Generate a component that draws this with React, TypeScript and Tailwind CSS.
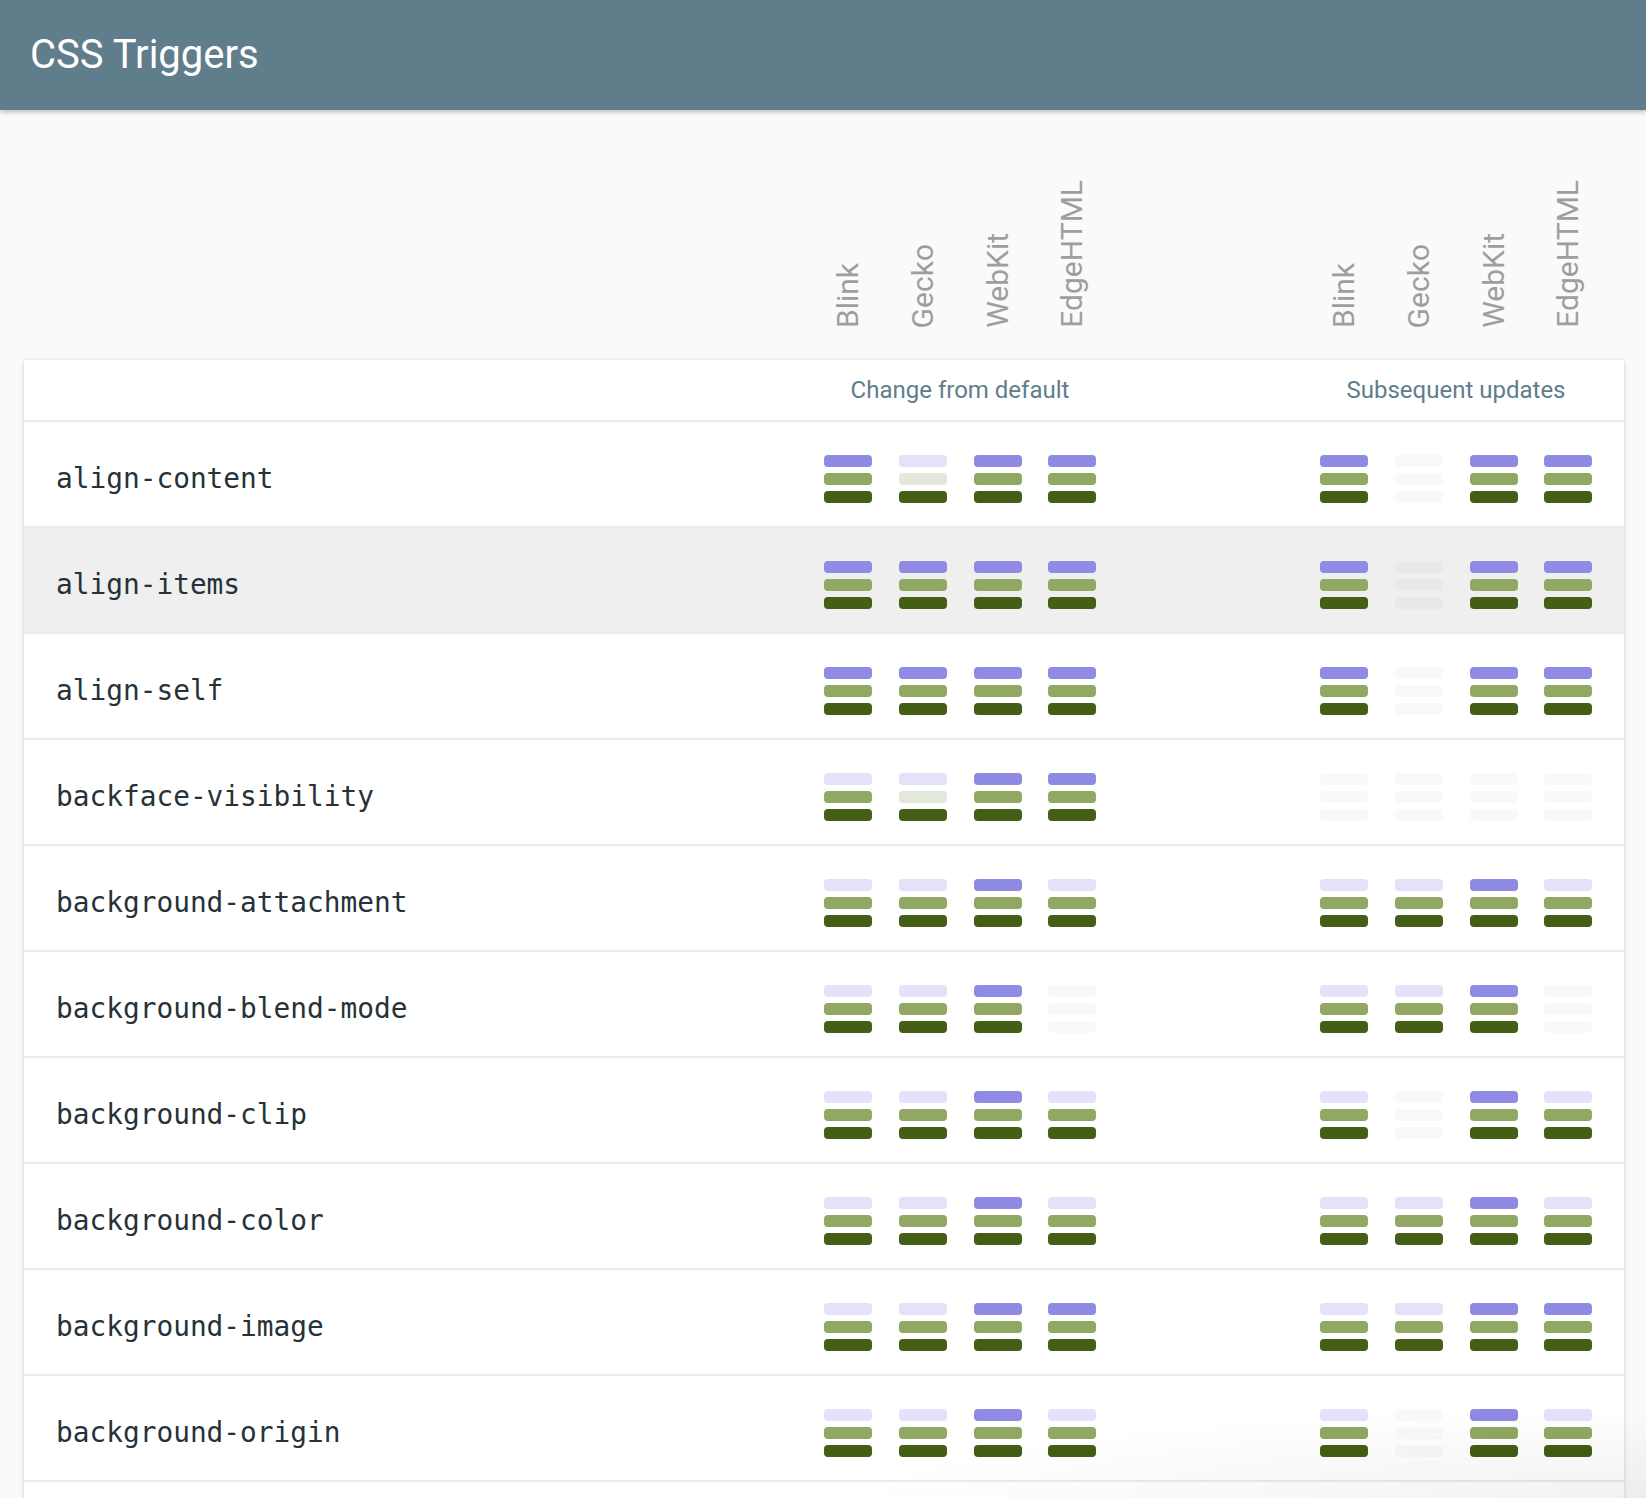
import React from "react";

type Cell = string; // "111" = layout/paint/composite, 0 = not triggered, n = no data

const rows: { name: string; change: Cell[]; update: Cell[]; hover?: boolean }[] = [
  { name: "align-content", change: ["111", "001", "111", "111"], update: ["111", "nnn", "111", "111"] },
  { name: "align-items", change: ["111", "111", "111", "111"], update: ["111", "nnn", "111", "111"], hover: true },
  { name: "align-self", change: ["111", "111", "111", "111"], update: ["111", "nnn", "111", "111"] },
  { name: "backface-visibility", change: ["011", "001", "111", "111"], update: ["nnn", "nnn", "nnn", "nnn"] },
  { name: "background-attachment", change: ["011", "011", "111", "011"], update: ["011", "011", "111", "011"] },
  { name: "background-blend-mode", change: ["011", "011", "111", "nnn"], update: ["011", "011", "111", "nnn"] },
  { name: "background-clip", change: ["011", "011", "111", "011"], update: ["011", "nnn", "111", "011"] },
  { name: "background-color", change: ["011", "011", "111", "011"], update: ["011", "011", "111", "011"] },
  { name: "background-image", change: ["011", "011", "111", "111"], update: ["011", "011", "111", "111"] },
  { name: "background-origin", change: ["011", "011", "111", "011"], update: ["011", "nnn", "111", "011"] },
  { name: "background-position", change: ["011", "011", "111", "011"], update: ["011", "011", "111", "011"] },
];

const engines = ["Blink", "Gecko", "WebKit", "EdgeHTML"];

const cols =
  "grid grid-cols-[787px_74px_76px_74px_74px_198px_74px_76px_74px_74px_19px]";

const onColors = ["bg-[#8f8ae3]", "bg-[#90a862]", "bg-[#445e15]"];
const offColors = ["bg-[#e4e2f8]", "bg-[#e2e9da]", "bg-[#d3dcc4]"];

const Bars = ({ cell }: { cell: Cell }) => (
  <div className="flex flex-col items-center gap-[6px]">
    {cell.split("").map((c, i) => (
      <div
        key={i}
        className={`h-3 w-12 rounded-[4px] ${
          c === "1" ? onColors[i] : c === "0" ? offColors[i] : "bg-black/[0.025]"
        }`}
      />
    ))}
  </div>
);

const EngineLabel = ({ name }: { name: string }) => (
  <div className="flex justify-center items-end">
    <span className="[writing-mode:vertical-rl] rotate-180 text-[30px] leading-none text-[#9e9e9e]">
      {name}
    </span>
  </div>
);

export default function App() {
  return (
    <div className="min-h-screen bg-[#fafafa] font-['Roboto','Liberation_Sans',sans-serif] overflow-hidden">
      <header className="relative z-10 h-[110px] bg-[#607d8b] shadow-[0_2px_5px_rgba(0,0,0,0.26)] flex items-center pl-[30px]">
        <h1 className="text-[40px] text-white leading-none">CSS Triggers</h1>
      </header>

      <div className="ml-6 w-[1600px]">
        <div className={`${cols} h-[250px] pb-[32px] items-end`}>
          <div />
          {engines.map((e) => (
            <EngineLabel key={"a" + e} name={e} />
          ))}
          <div />
          {engines.map((e) => (
            <EngineLabel key={"b" + e} name={e} />
          ))}
          <div />
        </div>

        <div className="bg-white shadow-[0_1px_4px_rgba(0,0,0,0.18)]">
          <div className={`${cols} h-[62px] border-b-2 border-[#ebebeb] items-center`}>
            <div />
            <div className="col-span-4 text-center text-[24px] text-[#607d8b]">Change from default</div>
            <div />
            <div className="col-span-4 text-center text-[24px] text-[#607d8b]">Subsequent updates</div>
            <div />
          </div>

          {rows.map((r) => (
            <div
              key={r.name}
              className={`${cols} h-[106px] pt-[9px] border-b-2 border-[#ebebeb] items-center ${
                r.hover ? "bg-[#efefef]" : ""
              }`}
            >
              <div className="pl-[32px] font-['DejaVu_Sans_Mono','Liberation_Mono',monospace] text-[27.8px] text-[#263238]">
                {r.name}
              </div>
              {r.change.map((c, i) => (
                <div key={"c" + i} className="flex justify-center">
                  <Bars cell={c} />
                </div>
              ))}
              <div />
              {r.update.map((c, i) => (
                <div key={"u" + i} className="flex justify-center">
                  <Bars cell={c} />
                </div>
              ))}
              <div />
            </div>
          ))}
        </div>
      </div>

      <div className="pointer-events-none fixed bottom-0 right-0 h-[90px] w-[800px] bg-[radial-gradient(ellipse_at_bottom_right,rgba(0,0,0,0.05),transparent_70%)]" />
    </div>
  );
}
